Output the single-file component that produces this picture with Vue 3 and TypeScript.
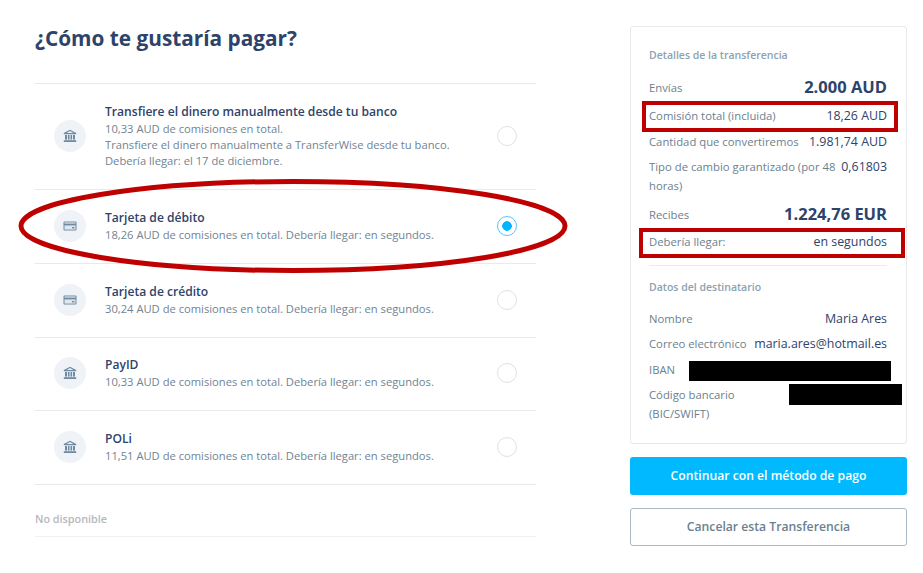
<template>
  <div class="page">
    <main class="methods">
      <h1 class="title">¿Cómo te gustaría pagar?</h1>
      <ul class="list">
        <li v-for="m in methods" :key="m.name" class="method" :class="{ tall: m.lines.length > 1 }">
          <span class="badge">
            <svg v-if="m.icon === 'bank'" width="14" height="14" viewBox="0 0 14 14">
              <path d="M7 .8 13.2 4v1.2H.8V4z" fill="#6f8aa3" />
              <path d="M7 2 3.6 3.9h6.8z" fill="#eef2f6" />
              <rect x="2" y="6" width="2" height="4.6" fill="#6f8aa3" />
              <rect x="4.9" y="6" width="1.6" height="4.6" fill="#6f8aa3" />
              <rect x="7.5" y="6" width="1.6" height="4.6" fill="#6f8aa3" />
              <rect x="10" y="6" width="2" height="4.6" fill="#6f8aa3" />
              <rect x=".8" y="11.2" width="12.4" height="1.8" fill="#6f8aa3" />
            </svg>
            <svg v-else width="14" height="14" viewBox="0 0 14 14">
              <rect x=".5" y="2.4" width="13" height="9.2" rx="1" fill="#6f8aa3" />
              <rect x="1.5" y="3.4" width="11" height="1.2" fill="#dfe6ec" />
              <rect x="1.5" y="6.4" width="11" height="4.2" fill="#dfe6ec" />
              <rect x="9" y="8" width="2.4" height="1.4" fill="#6f8aa3" />
            </svg>
          </span>
          <div class="info">
            <div class="name">{{ m.name }}</div>
            <div v-for="line in m.lines" :key="line" class="line">{{ line }}</div>
          </div>
          <span class="radio" :class="{ on: m.selected }"></span>
        </li>
      </ul>
      <div class="unavailable">No disponible</div>
      <svg class="circle" width="600" height="110" viewBox="0 0 600 110">
        <ellipse cx="293" cy="55" rx="272" ry="44.5" fill="none" stroke="#bf0000" stroke-width="5" />
      </svg>
    </main>

    <aside class="side">
      <section class="card">
        <h2 class="head">Detalles de la transferencia</h2>
        <div class="row big"><span>Envías</span><b>2.000 AUD</b></div>
        <div class="row boxed box-a"><span>Comisión total (incluida)</span><b>18,26 AUD</b></div>
        <div class="row tight"><span>Cantidad que convertiremos</span><b>1.981,74 AUD</b></div>
        <div class="row"><span>Tipo de cambio garantizado (por 48 horas)</span><b>0,61803</b></div>
        <div class="row big tight"><span>Recibes</span><b>1.224,76 EUR</b></div>
        <div class="row boxed box-b"><span>Debería llegar:</span><b>en segundos</b></div>
        <hr class="rule" />
        <h2 class="head second">Datos del destinatario</h2>
        <div class="row tight"><span>Nombre</span><b>Maria Ares</b></div>
        <div class="row"><span>Correo electrónico</span><b>maria.ares@hotmail.es</b></div>
        <div class="row tight"><span>IBAN</span><i class="redact r1"></i></div>
        <div class="row"><span>Código bancario<br />(BIC/SWIFT)</span><i class="redact r2"></i></div>
      </section>
      <button class="btn primary">Continuar con el método de pago</button>
      <button class="btn ghost">Cancelar esta Transferencia</button>
    </aside>
  </div>
</template>

<script setup lang="ts">
interface Method {
  name: string
  icon: 'bank' | 'card'
  lines: string[]
  selected?: boolean
}

const methods: Method[] = [
  {
    name: 'Transfiere el dinero manualmente desde tu banco',
    icon: 'bank',
    lines: [
      '10,33 AUD de comisiones en total.',
      'Transfiere el dinero manualmente a TransferWise desde tu banco.',
      'Debería llegar: el 17 de diciembre.',
    ],
  },
  {
    name: 'Tarjeta de débito',
    icon: 'card',
    selected: true,
    lines: ['18,26 AUD de comisiones en total. Debería llegar: en segundos.'],
  },
  {
    name: 'Tarjeta de crédito',
    icon: 'card',
    lines: ['30,24 AUD de comisiones en total. Debería llegar: en segundos.'],
  },
  {
    name: 'PayID',
    icon: 'bank',
    lines: ['10,33 AUD de comisiones en total. Debería llegar: en segundos.'],
  },
  {
    name: 'POLi',
    icon: 'bank',
    lines: ['11,51 AUD de comisiones en total. Debería llegar: en segundos.'],
  },
]
</script>

<style>
html,
body {
  background: #fff;
}
</style>

<style scoped>
.page {
  display: flex;
  width: 923px;
  height: 573px;
  overflow: hidden;
  box-sizing: border-box;
  padding: 25px 16px 0 35px;
  font-family: "Open Sans", "Lato", sans-serif;
  color: #6b7f8f;
}

.methods {
  position: relative;
  width: 501px;
  margin-right: 94px;
}

.title {
  margin: 0 0 32px;
  font-size: 20.8px;
  line-height: 26px;
  font-weight: 700;
  color: #2e4369;
}

.list {
  margin: 0;
  padding: 0;
  list-style: none;
  border-top: 1px solid #e8ebee;
}

.method {
  display: flex;
  align-items: center;
  height: 72.8px;
  padding: 0 19px;
  border-bottom: 1px solid #e8ebee;
}

.method.tall {
  height: 105px;
}

.badge {
  display: flex;
  align-items: center;
  justify-content: center;
  flex: none;
  width: 32px;
  height: 32px;
  border-radius: 50%;
  background: #eff3f7;
  margin-top: -1px;
}

.info {
  flex: 1;
  margin-top: -2px;
  margin-left: 19px;
}

.name {
  font-size: 12.1px;
  line-height: 19px;
  font-weight: 600;
  color: #2e4369;
}

.line {
  font-size: 11.2px;
  line-height: 16px;
  color: #6f8494;
}

.radio {
  flex: none;
  box-sizing: border-box;
  width: 20px;
  height: 20px;
  margin-top: -1px;
  border: 1px solid #dfe1e3;
  border-radius: 50%;
}

.radio.on {
  border-color: #53c8fb;
  background: radial-gradient(circle, #00b4ff 0 4.5px, #fff 5px);
}

.unavailable {
  padding: 26px 0 9px;
  font-size: 10.8px;
  line-height: 16px;
  font-weight: 600;
  color: #b4b8bb;
  border-bottom: 1px solid #f1f2f4;
}

.circle {
  position: absolute;
  left: -35px;
  top: 146px;
}

.side {
  display: flex;
  flex-direction: column;
  width: 277px;
  padding-top: 1px;
}

.card {
  box-sizing: border-box;
  height: 418px;
  padding: 21px 19px 0 18px;
  border: 1px solid #e6eaed;
  border-radius: 3px;
}

.head {
  margin: 0 0 13px;
  font-size: 10.5px;
  line-height: 14px;
  font-weight: 600;
  color: #8ba2b2;
}

.head.second {
  margin-bottom: 15px;
}

.row {
  position: relative;
  display: flex;
  justify-content: space-between;
  gap: 4px;
  margin-bottom: 7px;
  font-size: 11.3px;
  line-height: 19px;
}

.row b {
  flex: none;
  font-size: 12.4px;
  font-weight: 400;
  color: #2e4369;
}

.row.big {
  align-items: center;
}

.row.big b {
  font-size: 16.5px;
  line-height: 24px;
  font-weight: 700;
}

.row.tight {
  margin-bottom: 6px;
}

.boxed::after {
  content: "";
  position: absolute;
  border: 4px solid #bf0000;
}

.box-a::after {
  left: -7px;
  right: -11px;
  top: -5px;
  bottom: -7px;
}

.box-b::after {
  left: -10px;
  right: -18px;
  top: -4px;
  bottom: -7px;
}

.rule {
  margin: 14px 0 14px;
  border: 0;
  border-top: 1px solid #e8ebee;
}

.redact {
  position: absolute;
  background: #000;
}

.r1 {
  left: 40px;
  top: 1px;
  width: 202px;
  height: 20px;
}

.r2 {
  left: 140px;
  top: -1px;
  width: 113px;
  height: 21px;
}

.btn {
  box-sizing: border-box;
  width: 277px;
  height: 38px;
  padding-bottom: 2px;
  border-radius: 3px;
  font-family: inherit;
  font-size: 12.2px;
  font-weight: 600;
}

.primary {
  margin-top: 13px;
  border: 0;
  background: #00b9ff;
  color: #fff;
}

.ghost {
  margin-top: 13px;
  border: 1px solid #a9b9c4;
  background: #fff;
  color: #6b7f8f;
}
</style>
